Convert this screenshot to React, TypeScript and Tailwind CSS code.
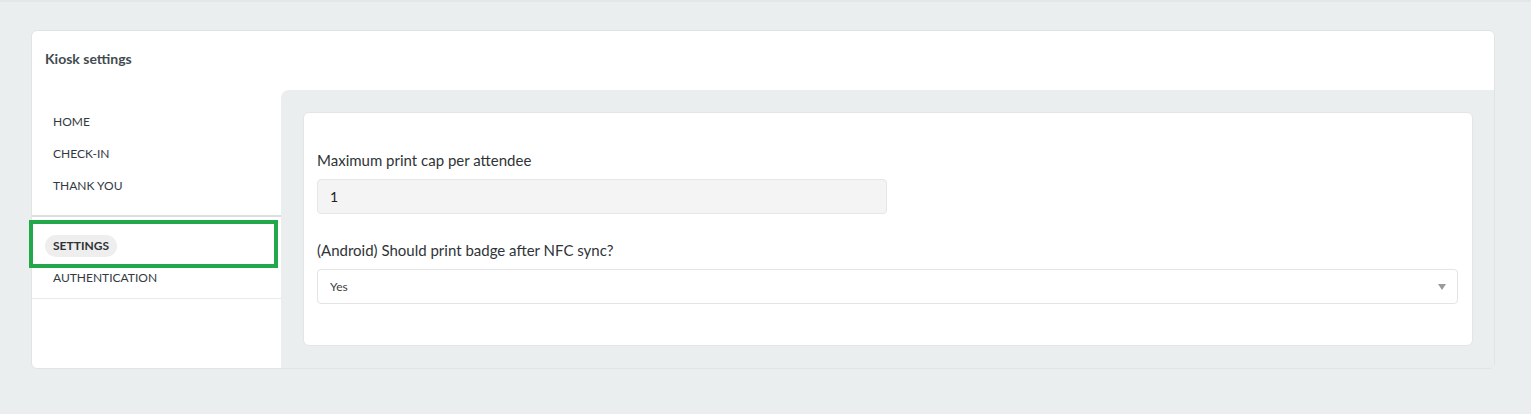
const NAV_TOP = ["HOME", "CHECK-IN", "THANK YOU"];

function NavItem({ label, active }: { label: string; active?: boolean }) {
  return (
    <li className="relative flex h-8 items-center pl-[13px]">
      {active ? (
        <>
          <span className="rounded-full bg-[#eeeeee] px-2 py-[3px] text-[12px] font-bold leading-4 text-[#2f3336]">
            {label}
          </span>
          {/* highlight frame drawn over the row */}
          <span className="pointer-events-none absolute -top-[10px] -bottom-[6px] -left-[3px] right-[3px] border-4 border-[#22a84a]" />
        </>
      ) : (
        <span className="pl-2 text-[12px] leading-4 text-[#333a3f]">{label}</span>
      )}
    </li>
  );
}

export default function App() {
  return (
    <div className="min-h-[414px] w-full border-t-2 border-[#e4e7e8] bg-[#ebeeef] pt-[28px] pr-[36px] pl-[31px] font-['Lato','Liberation_Sans',sans-serif]">
      <div className="rounded-md border border-[#e1e4e5] bg-white">
        <div className="flex h-[59px] items-center pb-[4px] pl-[13px]">
          <h1 className="text-[14px] font-bold text-[#434b50]">Kiosk settings</h1>
        </div>

        <div className="flex">
          <aside className="w-[249px] shrink-0 pb-[69px]">
            <ul className="border-b-2 border-[#dcdfe0] pt-[16px] pb-[13px]">
              {NAV_TOP.map((item) => (
                <NavItem key={item} label={item} />
              ))}
            </ul>
            <ul className="border-b border-[#e7e9ea] pt-[13px] pb-[4px]">
              <NavItem label="SETTINGS" active />
              <NavItem label="AUTHENTICATION" />
            </ul>
          </aside>

          <section className="flex-1 rounded-tl-lg bg-[#ebeeef] pt-[22px] pr-[21px] pb-[20px] pl-[22px]">
            <div className="rounded-md border border-[#e3e6e7] bg-white pt-[37px] pr-[14px] pb-[41px] pl-[13px]">
              <label className="block text-[15px] leading-5 text-[#2f3438]">
                Maximum print cap per attendee
              </label>
              <input
                type="text"
                defaultValue="1"
                className="mt-[9px] block h-[35px] w-[570px] rounded border border-[#e6e6e6] bg-[#f4f4f4] px-3 text-[14px] text-[#222] outline-none"
              />

              <label className="mt-[26px] block text-[15px] leading-5 text-[#2f3438]">
                (Android) Should print badge after NFC sync?
              </label>
              <div className="mt-[9px] flex h-[35px] w-full items-center justify-between rounded border border-[#e4e4e4] bg-white pr-[11px] pl-3">
                <span className="text-[12px] text-[#3a3f42]">Yes</span>
                <svg width="8" height="6" viewBox="0 0 8 6" className="text-[#9a9a9a]">
                  <path d="M0 0h8L4 6z" fill="currentColor" />
                </svg>
              </div>
            </div>
          </section>
        </div>
      </div>
    </div>
  );
}
